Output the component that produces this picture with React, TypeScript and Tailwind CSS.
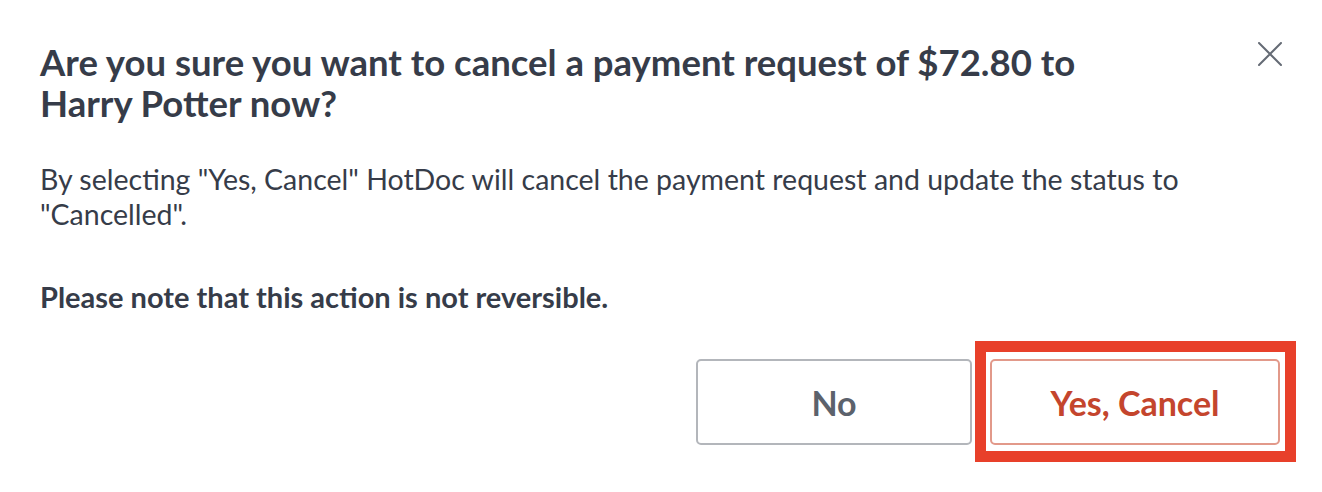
import React from "react";

export default function App() {
  return (
    <div
      className="w-[1322px] h-[492px] bg-white text-[#363c49]"
      style={{ fontFamily: "Lato, 'Noto Sans', sans-serif" }}
    >
      <div className="flex items-start justify-between pl-10 pr-[40px] pt-[42px]">
        <h2 className="max-w-[1100px] text-[36.5px] font-bold leading-[41px]">
          Are you sure you want to cancel a payment request of $72.80 to Harry Potter now?
        </h2>
        <button className="mt-[0px] text-[#656b75]" aria-label="Close">
          <svg width="24" height="24" viewBox="0 0 24 24" fill="none" stroke="currentColor" strokeWidth="2" strokeLinecap="round">
            <path d="M1 1L23 23M23 1L1 23" />
          </svg>
        </button>
      </div>
      <div className="px-10 pt-[38px]">
        <p className="text-[28.5px] leading-[35px]">
          By selecting "Yes, Cancel" HotDoc will cancel the payment request and update the status to "Cancelled".
        </p>
        <p className="mt-[47px] text-[29px] font-bold leading-[35px]">
          Please note that this action is not reversible.
        </p>
      </div>
      <div className="flex justify-end gap-[18px] pr-[42px] pt-[45px]">
        <button className="h-[86px] w-[276px] rounded-[5px] border-2 border-[#b3b6bb] text-[34px] font-bold text-[#5c626c]">
          No
        </button>
        <div className="relative">
          <div className="pointer-events-none absolute -left-[15px] -top-[18px] -right-[16px] -bottom-[17px] border-[11px] border-[#e8402a]" />
          <button className="h-[86px] w-[290px] rounded-[5px] border-2 border-[#e2998a] text-[34px] font-bold text-[#c4452d]">
            Yes, Cancel
          </button>
        </div>
      </div>
    </div>
  );
}
